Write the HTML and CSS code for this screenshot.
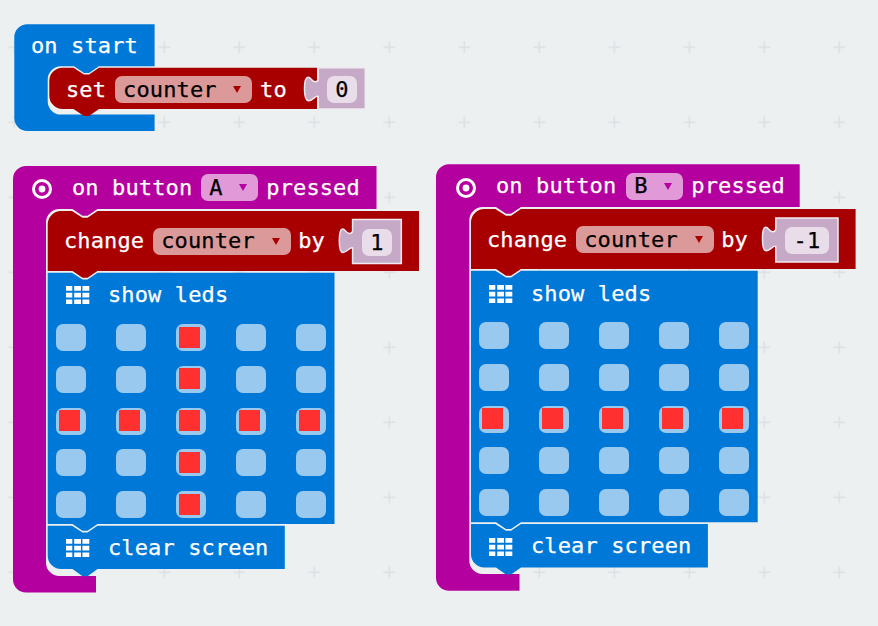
FILE: index.html
```html
<!DOCTYPE html>
<html lang="en">
<head>
<meta charset="utf-8">
<title>Blocks workspace</title>
<link rel="stylesheet" href="styles.css">
</head>
<body>
<svg class="defs" aria-hidden="true">
  <symbol id="event" viewBox="0 0 20 20"><circle cx="10" cy="10" r="8.5" fill="none" stroke="#fff" stroke-width="3"/><circle cx="10" cy="10" r="3.4" fill="#fff"/></symbol>
  <symbol id="matrix" viewBox="0 0 24 18"><path fill="#fff" d="M0 0h6.3v4.8H0zM8.2 0h6.8v4.8H8.2zM16.4 0h6.9v4.8h-6.9zM0 6.7h6.3v4.8H0zM8.2 6.7h6.8v4.8H8.2zM16.4 6.7h6.9v4.8h-6.9zM0 13.4h6.3v4.6H0zM8.2 13.4h6.8v4.6H8.2zM16.4 13.4h6.9v4.6h-6.9z"/></symbol>
  <symbol id="arrow" viewBox="0 0 8 7"><path fill="currentColor" d="M0 0h8L4 7z"/></symbol>
</svg>
<main class="workspace">
  <svg class="grid" width="878" height="626" aria-hidden="true">
    <pattern id="cross" x="-23.2" y="9.8" width="75" height="75" patternUnits="userSpaceOnUse"><path d="M31.5 37.5h12M37.5 31.5v12" stroke="#dce0e4" stroke-width="1.5"/></pattern>
    <rect width="878" height="626" fill="url(#cross)"/>
  </svg>

  <section class="stack start">
    <svg class="shape" width="352" height="108" aria-hidden="true">
      <path class="basic" d="M13.3.3H140.6V42.3H85l-10 6.7h-5l-10-6.7H47a13.3 13.3 0 0 0-13.3 13.3V77.300A13.3 13.3 0 0 0 47 90.600H140.600V107H13.300A13 13 0 0 1 .3 94V13.300A13 13 0 0 1 13.300.3z"/>
      <path class="variable" d="M48.600 43.700H59.500l10.500 6.700h5l10-6.700H303V85H85l-10 7h-5l-10.500-7H48.600A13.300 13.300 0 0 1 35.300 71.700V57A13.300 13.300 0 0 1 48.600 43.700z"/>
      <path class="value" d="M304.300 43.700H351.300V85H304.300V72.300C301.700 70.800 298.700 76.800 294.700 76.800C292.200 76.800 290.500 72.300 290.500 65C290.500 56.300 292.200 53.300 294.200 53.300C297.200 53.300 297.700 57.800 301.200 57.800C303.200 57.800 304.300 56.800 304.300 54.300z"/>
    </svg>
    <div class="row head"><span>on start</span></div>
    <div class="row set"><span>set</span><span class="pill">counter<svg><use href="#arrow"/></svg></span><span>to</span><span class="field">0</span></div>
  </section>

  <section class="stack button-a">
    <svg class="shape" width="407" height="428" aria-hidden="true">
      <path class="input" d="M13 0H363.500V43H84.500l-10 6.700h-5l-10-6.700H46.300A13.300 13.300 0 0 0 33 56.300V396.700A13.300 13.300 0 0 0 46.300 410H83V426.500H13A13 13 0 0 1 0 413.500V13A13 13 0 0 1 13 0z"/>
      <path class="variable" d="M48 45H59l10.500 6.700h5l10-6.700H406V105H84.500l-10 6.700h-5L59.500 105H34.700V58.300A13.300 13.300 0 0 1 48 45z"/>
      <path class="basic" d="M34.700 106.800H59l10.500 6.700h5l10-6.700H321.500V358H84.500l-10 6.700h-5L59.500 358H34.700z"/>
      <path class="basic" d="M34.700 359.800H59l10.500 6.700h5l10-6.700H271.800V403H84.500l-10 7.300h-5L59.500 403H48A13.300 13.300 0 0 1 34.700 389.700z"/>
      <path class="value" d="M339.600 53.600H388.300V97.500H339.600V82C337 80.500 334 86.500 330 86.500C327.500 86.500 326.300 82 326.300 74.700C326.300 66 327.500 63 329.500 63C332.500 63 333 67.500 336.500 67.500C338.500 67.500 339.600 66.500 339.600 64z"/>
    </svg>
    <div class="row event"><svg class="icon-event"><use href="#event"/></svg><span>on button</span><span class="pill short">A<svg><use href="#arrow"/></svg></span><span>pressed</span></div>
    <div class="row change"><span>change</span><span class="pill">counter<svg><use href="#arrow"/></svg></span><span>by</span><span class="field">1</span></div>
    <div class="row show"><svg class="icon-matrix"><use href="#matrix"/></svg><span>show leds</span></div>
    <div class="leds">
      <i></i><i></i><i class="on"></i><i></i><i></i>
      <i></i><i></i><i class="on"></i><i></i><i></i>
      <i class="on"></i><i class="on"></i><i class="on"></i><i class="on"></i><i class="on"></i>
      <i></i><i></i><i class="on"></i><i></i><i></i>
      <i></i><i></i><i class="on"></i><i></i><i></i>
    </div>
    <div class="row clear"><svg class="icon-matrix"><use href="#matrix"/></svg><span>clear screen</span></div>
  </section>

  <section class="stack button-b">
    <svg class="shape" width="421" height="428" aria-hidden="true">
      <path class="input" d="M13 .3H363.700V43H85l-10 6.700h-5l-10-6.700H46.600A13.300 13.300 0 0 0 33.300 56.300V396.700A13.300 13.300 0 0 0 46.600 410H83.500V426.700H13A13 13 0 0 1 0 413.700V13.300A13 13 0 0 1 13 .3z"/>
      <path class="variable" d="M48.300 45H59.300l10.700 6.700h5l10-6.700H419.600V105H85l-10 6.700h-5L60 105H35V58.300A13.300 13.300 0 0 1 48.300 45z"/>
      <path class="basic" d="M35 106.800H59.300l10.700 6.700h5l10-6.700H321.700V358.300H85l-10 6.700h-5L60 358.300H35z"/>
      <path class="basic" d="M35 360H59.300l10.700 6.700h5l10-6.700H271.900V403.500H85l-10 7h-5L60 403.500H48.300A13.300 13.300 0 0 1 35 390.200z"/>
      <path class="value" d="M339.800 54H402V98H339.800V82.300C337.200 80.800 334.200 86.800 330.200 86.800C327.700 86.800 326.500 82.300 326.500 75C326.500 66.300 327.700 63.300 329.700 63.300C332.700 63.300 333.200 67.800 336.700 67.800C338.700 67.800 339.800 66.800 339.800 64.300z"/>
    </svg>
    <div class="row event"><svg class="icon-event"><use href="#event"/></svg><span>on button</span><span class="pill short">B<svg><use href="#arrow"/></svg></span><span>pressed</span></div>
    <div class="row change"><span>change</span><span class="pill">counter<svg><use href="#arrow"/></svg></span><span>by</span><span class="field wide">-1</span></div>
    <div class="row show"><svg class="icon-matrix"><use href="#matrix"/></svg><span>show leds</span></div>
    <div class="leds">
      <i></i><i></i><i></i><i></i><i></i>
      <i></i><i></i><i></i><i></i><i></i>
      <i class="on"></i><i class="on"></i><i class="on"></i><i class="on"></i><i class="on"></i>
      <i></i><i></i><i></i><i></i><i></i>
      <i></i><i></i><i></i><i></i><i></i>
    </div>
    <div class="row clear"><svg class="icon-matrix"><use href="#matrix"/></svg><span>clear screen</span></div>
  </section>
</main>
</body>
</html>
```
FILE: styles.css
```css
* { box-sizing: border-box; }
body { margin: 0; }
.defs { display: none; }

.workspace {
  position: relative;
  width: 878px;
  height: 626px;
  overflow: hidden;
  background: #ecf0f1;
  color: #fff;
  font: 22px/26px "DejaVu Sans Mono", "Liberation Mono", monospace;
  letter-spacing: 0.12px;
  -webkit-text-stroke: 0.25px currentColor;
}
.grid { display: block; }

.stack { position: absolute; z-index: 0; }
.start { left: 14px; top: 24px; width: 352px; height: 108px; }
.button-a { left: 13px; top: 166px; width: 407px; height: 428px; }
.button-b { left: 436px; top: 164px; width: 421px; height: 428px; }
.shape { position: absolute; left: 0; top: 0; z-index: -1; }

.basic { fill: #0078d7; }
.input { fill: #b4009e; }
.variable { fill: #a80000; }
.value { fill: #c6a9c7; stroke: #f0eaf1; stroke-width: 1.5; }

.row { display: flex; align-items: flex-start; white-space: pre; }
.head { height: 52px; padding: 9px 0 0 17px; }
.set { padding-left: 52px; }
.set > span { line-height: 28px; }
.event { height: 62px; padding: 8px 0 0 19px; line-height: 28px; }
.change { height: 57px; padding-left: 51px; }
.show { height: 39px; padding: 1px 0 0 53px; }
.clear { padding: 21px 0 0 53px; }
.button-b .change { line-height: 28px; }
.button-b .show span { margin-top: -3px; }

.pill, .field { height: 27px; border-radius: 7px; color: #000; }
.pill {
  display: flex;
  justify-content: space-between;
  width: 138px;
  margin: 0 7px 0 9px;
  padding: 0 11px 0 8px;
  background: #dc9999;
}
.pill svg { width: 8px; height: 7px; margin-top: 10px; color: #a80000; }
.short { width: 57px; margin-right: 8px; background: #e199d8; }
.short svg { color: #b4009e; }
.set .pill { width: 137px; margin-right: 8px; }
.button-b .event .pill { margin-left: 10px; margin-top: 1px; line-height: 26px; }
.field { width: 30px; background: #e8dde9; text-align: center; }
.set .field { margin-left: 40px; }
.change .field { margin: 1px 0 0 37px; line-height: 28px; }
.change .wide { width: 44px; }

.icon-event { width: 20px; height: 20px; margin: 5px 20px 0 0; }
.button-b .icon-event { margin: 6px 20px 0 1px; }
.icon-matrix { width: 24px; height: 18px; margin: 0 18px 0 0; }
.button-b .icon-matrix { margin-top: 1px; }
.show span, .clear span { margin-top: -4px; }

.leds {
  display: grid;
  grid-template-columns: repeat(5, 30px);
  grid-auto-rows: 27px;
  gap: 14.75px 30px;
  padding-left: 43px;
}
.leds i { border-radius: 7px; background: #99c9ef; }
.leds .on::before {
  content: "";
  display: block;
  width: 21px;
  height: 21px;
  margin: 2.5px 0 0 3px;
  background: #ff3030;
}
```
